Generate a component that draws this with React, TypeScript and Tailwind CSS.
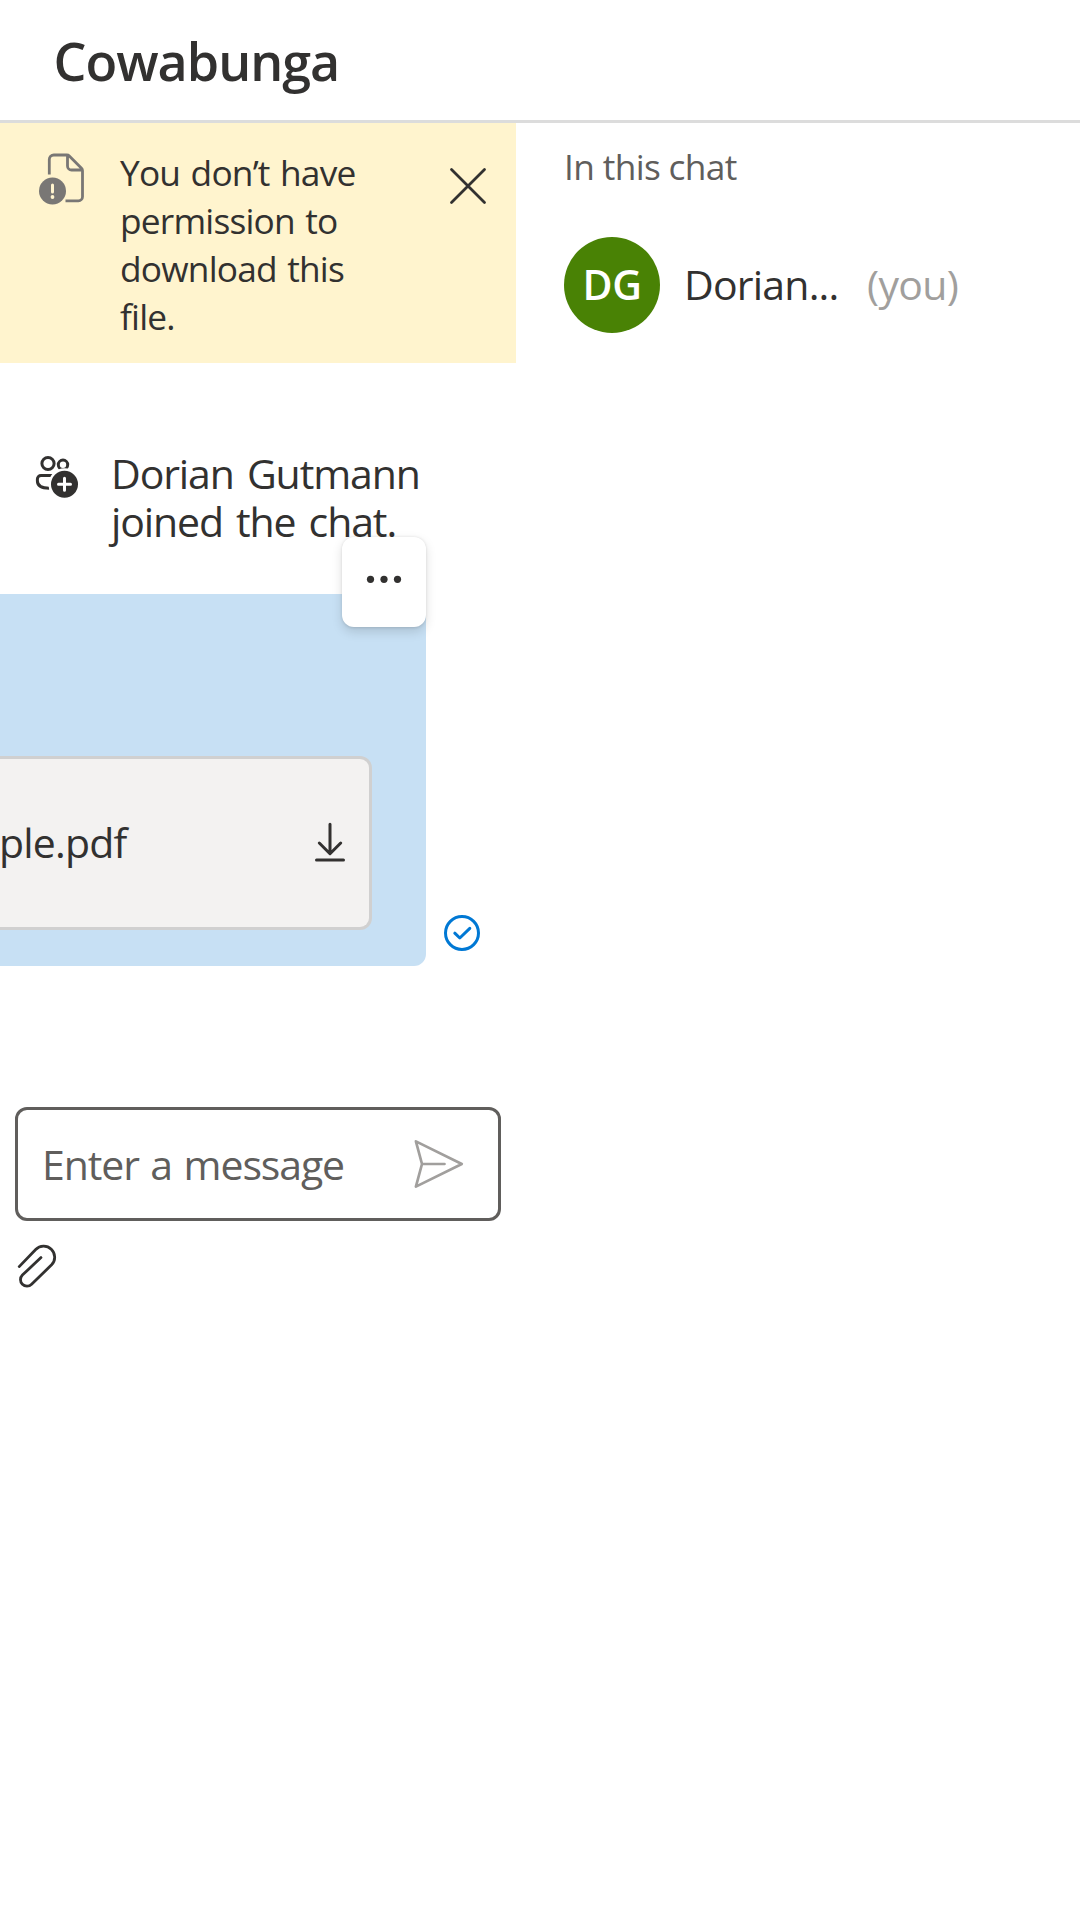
import type { ReactNode } from "react";

type IconProps = { className: string; box: string; children: ReactNode };

function Icon({ className, box, children }: IconProps) {
  return (
    <svg
      className={className}
      viewBox={box}
      fill="none"
      stroke="currentColor"
      strokeWidth={3}
      strokeLinecap="round"
      strokeLinejoin="round"
      aria-hidden="true"
    >
      {children}
    </svg>
  );
}

function FileErrorIcon() {
  return (
    <Icon className="h-[52px] w-[46px] shrink-0 text-[#797775]" box="19 12.5 46 52">
      <path
        strokeLinecap="butt"
        strokeWidth={2.8}
        d="M29.3 34V19a4.5 4.5 0 0 1 4.5-4.5H46.8a3.5 3.5 0 0 1 2.5 1L61.5 27.7a3.5 3.5 0 0 1 1 2.5V56.2a4.1 4.1 0 0 1-4.1 4.1H45.5M47.5 14.5V25.5a4 4 0 0 0 4 4H62.5"
      />
      <circle cx="32.5" cy="50.5" r="13.5" fill="currentColor" stroke="none" />
      <path stroke="#FFF4CE" d="M32.5 44.5v7" />
      <circle cx="32.5" cy="56.5" r="1.9" fill="#FFF4CE" stroke="none" />
    </Icon>
  );
}

function PeopleAddIcon() {
  return (
    <Icon className="h-[44px] w-[44px] shrink-0" box="15 15 44 44">
      <circle cx="28" cy="23.5" r="6.1" />
      <circle cx="43" cy="24.8" r="4.7" />
      <path strokeLinecap="butt" d="M33 35.5H21a3.6 3.6 0 0 0-3.6 3.6V41c0 5 4.2 7.2 11.8 7.2" />
      <circle cx="44.5" cy="44.3" r="16" fill="#fff" stroke="none" />
      <circle cx="44.5" cy="44.3" r="13.5" fill="currentColor" stroke="none" />
      <path stroke="#fff" d="M44.5 38.3v12M38.5 44.3h12" />
    </Icon>
  );
}

function Header() {
  return (
    <header className="flex h-[123px] items-center border-b-[3px] border-[#dcdcdc] pt-[2px] pl-[53.5px]">
      <h1 className="text-[52px] leading-[72px] font-semibold tracking-[-1px]">Cowabunga</h1>
    </header>
  );
}

function PermissionBanner() {
  return (
    <div className="flex h-[240px] bg-[#FFF4CE] pl-[39px]">
      <div className="pt-[29.5px]">
        <FileErrorIcon />
      </div>
      <p className="ml-[35px] w-[260px] pt-[25px] text-[35.3px] leading-[48px] tracking-[-0.8px] [word-spacing:2px]">
        You don’t have permission to download this file.
      </p>
      <button className="mt-[44px] ml-[69px] h-[38px]" aria-label="Dismiss">
        <Icon className="h-[38px] w-[38px]" box="0 0 38 38">
          <path strokeWidth={2.8} d="M2.5 2.5l33 33M35.5 2.5l-33 33" />
        </Icon>
      </button>
    </div>
  );
}

function Message() {
  return (
    <div className="mt-[49px] flex items-end">
      <div className="relative h-[372px] w-[426px] rounded-r-[12px] bg-[#C7E0F4] pt-[162px]">
        <div className="absolute -top-[57px] right-0 flex h-[90px] w-[84px] justify-center rounded-[12px] bg-white pt-[36px] shadow-[0_4.8px_10.8px_rgba(0,0,0,0.132),0_0.9px_2.7px_rgba(0,0,0,0.108)]">
          <svg className="h-[12px] w-[36px]" viewBox="0 0 36 12" fill="currentColor" aria-hidden="true">
            <circle cx="4.5" cy="6.3" r="3.6" />
            <circle cx="18" cy="6.3" r="3.6" />
            <circle cx="31.5" cy="6.3" r="3.6" />
          </svg>
        </div>
        <div className="flex h-[174px] w-[372px] items-center justify-between rounded-r-[12px] border-y-[3px] border-r-[3px] border-[#d0d0d0] bg-[#F3F2F1] pr-[22px]">
          <span className="-ml-px pb-[2px] text-[41px] leading-[56px] tracking-[-0.8px]">ple.pdf</span>
          <Icon className="mb-[3px] h-[42px] w-[34px]" box="13 20.3 34 42">
            <path d="M30 23.5v29M19.3 42.3L30 53l10.7-10.7M16.5 59.4h27" />
          </Icon>
        </div>
      </div>
      <Icon className="mb-[14px] ml-[17px] h-[38px] w-[38px] text-[#0078D4]" box="13 14 38 38">
        <circle cx="32" cy="33" r="16.5" />
        <path d="M24.8 33.2l5 4.8 10-9.6" />
      </Icon>
    </div>
  );
}

function SendBox() {
  return (
    <div className="mt-[141px] px-[15px]">
      <div className="flex h-[114px] items-center justify-between rounded-[12px] border-[3px] border-[#605E5C] pr-[34.5px] pl-[24px]">
        <span className="pb-[1px] text-[41px] leading-[56px] tracking-[-1.1px] text-[#605E5C] [word-spacing:2px]">
          Enter a message
        </span>
        <Icon className="h-[50px] w-[50px] text-[#A19F9D]" box="13.5 19 50 50">
          <path strokeWidth={2.7} d="M15.4 21.4L61.3 44 15.4 66.6 21.5 44zM21.5 44h22.5" />
        </Icon>
      </div>
      <Icon className="mt-[21.5px] h-[46px] w-[42px]" box="15 13 42 46">
        <path
          strokeWidth={2.8}
          d="M19.2 36.6L35.7 19.5a11 11 0 0 1 15.9 15.3L31.6 54.3a6.5 6.5 0 0 1-9.2-9.2L41 27.6"
        />
      </Icon>
    </div>
  );
}

function ChatPane() {
  return (
    <main className="w-[516px] shrink-0">
      <PermissionBanner />
      <div className="mt-[86px] flex pl-[35px]">
        <div className="pt-[6px]">
          <PeopleAddIcon />
        </div>
        <p className="ml-[32px] w-[315px] text-[41px] leading-[48px] tracking-[-1.1px] [word-spacing:3.5px]">
          Dorian Gutmann joined the chat.
        </p>
      </div>
      <Message />
      <SendBox />
    </main>
  );
}

function ParticipantPane() {
  return (
    <aside className="flex-1 pt-[19px] pl-[48px]">
      <h2 className="text-[35.3px] leading-[48px] tracking-[-0.65px] text-[#605E5C]">
        In this chat
      </h2>
      <div className="mt-[47px] flex h-[96px] items-center">
        <div className="flex size-[96px] items-center justify-center rounded-full bg-[#498205] pb-[2px] text-[41px] leading-[56px] font-semibold tracking-[-0.5px] text-white">
          DG
        </div>
        <span className="ml-[24px] w-[183px] pb-[2px] text-[41px] leading-[56px] tracking-[-0.8px]">
          Dorian...
        </span>
        <span className="pb-[2px] text-[41px] leading-[56px] tracking-[-0.7px] text-[#A19F9D]">
          (you)
        </span>
      </div>
    </aside>
  );
}

export default function App() {
  return (
    <div className="min-h-screen w-[1080px] overflow-hidden bg-white font-['Open_Sans','Noto_Sans',sans-serif] text-[#323130]">
      <Header />
      <div className="flex">
        <ChatPane />
        <ParticipantPane />
      </div>
    </div>
  );
}
